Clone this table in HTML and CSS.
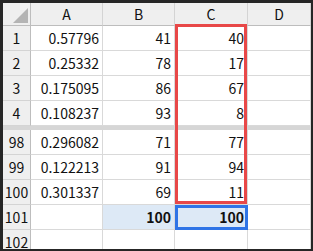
FILE: index.html
```html
<!DOCTYPE html>
<html lang="ja">
<head>
    <meta charset="UTF-8">
    <meta name="viewport" content="width=device-width, initial-scale=1.0">
    <title>Sheet</title>
    <link rel="stylesheet" href="styles.css">
</head>
<body>
    <div class="sheet">
        <div class="grid">
            <div class="corner"><div class="corner-tri"></div></div>
            <div class="col-head">A</div>
            <div class="col-head">B</div>
            <div class="col-head">C</div>
            <div class="col-head">D</div>

            <div class="row-head">1</div>
            <div class="cell">0.57796</div>
            <div class="cell">41</div>
            <div class="cell">40</div>
            <div class="cell"></div>

            <div class="row-head">2</div>
            <div class="cell">0.25332</div>
            <div class="cell">78</div>
            <div class="cell">17</div>
            <div class="cell"></div>

            <div class="row-head">3</div>
            <div class="cell">0.175095</div>
            <div class="cell">86</div>
            <div class="cell">67</div>
            <div class="cell"></div>

            <div class="row-head">4</div>
            <div class="cell">0.108237</div>
            <div class="cell">93</div>
            <div class="cell">8</div>
            <div class="cell"></div>

            <div class="split"></div>

            <div class="row-head">98</div>
            <div class="cell">0.296082</div>
            <div class="cell">71</div>
            <div class="cell">77</div>
            <div class="cell"></div>

            <div class="row-head">99</div>
            <div class="cell">0.122213</div>
            <div class="cell">91</div>
            <div class="cell">94</div>
            <div class="cell"></div>

            <div class="row-head">100</div>
            <div class="cell">0.301337</div>
            <div class="cell">69</div>
            <div class="cell">11</div>
            <div class="cell"></div>

            <div class="row-head">101</div>
            <div class="cell"></div>
            <div class="cell total">100</div>
            <div class="cell total">100</div>
            <div class="cell"></div>

            <div class="row-head">102</div>
            <div class="cell"></div>
            <div class="cell"></div>
            <div class="cell"></div>
            <div class="cell"></div>
        </div>

        <!-- selection outlines -->
        <div class="range-box"></div>
        <div class="active-box"></div>
    </div>
</body>
</html>
```

FILE: styles.css
```css
body {
    margin: 0;
    padding: 3px 2px 0 3px;
    background-color: #262626;
    font-family: "Noto Sans CJK JP", "Noto Sans", sans-serif;
    font-size: 14px;
    color: #111;
}

.sheet {
    position: relative;
    height: 246px;
    overflow: hidden;
    background-color: white;
}

.grid {
    display: grid;
    grid-template-columns: 28px 72px 72px 73px 1fr;
    grid-template-rows: 23px repeat(4, 25px) 4px repeat(5, 25px);
}

.corner,
.col-head,
.row-head {
    background-color: #efefef;
    border-right: 1px solid #bdbdbd;
    border-bottom: 1px solid #bdbdbd;
    display: flex;
    align-items: center;
    justify-content: center;
}

.col-head {
    border-right-color: #d4d4d4;
}

.corner {
    justify-content: flex-end;
    align-items: flex-end;
    padding: 0 2px 2px 0;
}

.corner-tri {
    width: 0;
    height: 0;
    border-left: 15px solid transparent;
    border-bottom: 15px solid #b4b4b4;
}

.row-head {
    border-bottom-color: #d4d4d4;
}

.cell {
    border-right: 1px solid #d9d9d9;
    border-bottom: 1px solid #d9d9d9;
    display: flex;
    align-items: center;
    justify-content: flex-end;
    padding-right: 3px;
}

.total {
    background-color: #dde9f6;
    font-weight: bold;
}

.split {
    grid-column: 1 / -1;
    background-color: #d6d6d6;
}

.range-box {
    position: absolute;
    left: 172px;
    top: 21px;
    width: 66px;
    height: 174px;
    border: 3px solid #e84848;
}

.active-box {
    position: absolute;
    left: 172px;
    top: 202px;
    width: 67px;
    height: 19px;
    border: 3px solid #2f74e6;
}
```
